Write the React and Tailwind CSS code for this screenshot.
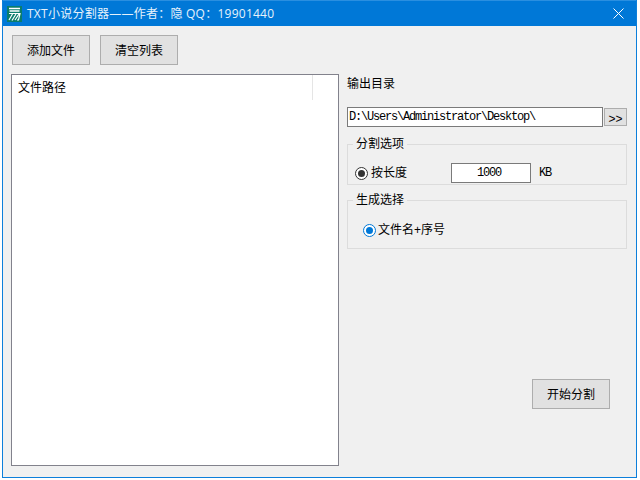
const cjk = "font-['Liberation_Sans','Noto_Sans_CJK_SC',sans-serif]";
const mono = "font-['Liberation_Mono','Noto_Sans_CJK_SC',monospace]";

function Btn({ children, className = "" }) {
  return (
    <button className={`flex items-center justify-center border border-[#adadad] bg-[#e1e1e1] pt-[1px] text-[12px] text-black ${cjk} ${className}`}>
      {children}
    </button>
  );
}

function Logo() {
  return (
    <svg width="15" height="16" viewBox="0 0 15 16" className="shrink-0">
      <rect width="15" height="16" fill="#0b7d6c" />
      <path d="M2 2.5h11M2.5 5h10" stroke="#fff" strokeWidth="1.3" fill="none" />
      <path d="M2 7.5h11L11.5 14h-1.5M5.5 8l-3.5 6M9 8l-4 6.5M12 8l-4 6" stroke="#fff" strokeWidth="1.2" fill="none" />
    </svg>
  );
}

function Radio({ blue }) {
  return (
    <span className={`flex h-[13px] w-[13px] shrink-0 items-center justify-center rounded-full border-[1.5px] bg-white ${blue ? "border-[#0078d7]" : "border-[#333333]"}`}>
      <span className={`h-[7px] w-[7px] rounded-full ${blue ? "bg-[#0078d7]" : "bg-[#333333]"}`} />
    </span>
  );
}

export default function App() {
  return (
    <div className="h-[480px] w-[640px] bg-white pl-[2px] pr-[3px] pb-[2px]">
      <div className={`flex h-[478px] w-[635px] flex-col border-x border-b border-[#0c7fdb] bg-[#f0f0f0] ${cjk}`}>
        <div className="flex h-[26px] shrink-0 items-center border-t border-[#2a8fe0] bg-[#0078d7] pl-[4px] pr-[12px] text-white">
          <Logo />
          <span className="ml-[5px] whitespace-nowrap text-[12px] tracking-[0.25px] font-['Open_Sans','Noto_Sans_CJK_SC',sans-serif] text-[#e6f2fb]">
            TXT小说分割器——作者：隐 QQ：19901440
          </span>
          <svg width="11" height="11" viewBox="0 0 11 11" className="ml-auto">
            <path d="M.5.5l10 10M10.5.5l-10 10" stroke="#fff" strokeWidth="1" fill="none" />
          </svg>
        </div>
        <div className="flex min-h-0 flex-1 pl-[8px] pr-[9px] pt-[9px]">
          <div className="flex w-[328px] shrink-0 flex-col">
            <div className="flex gap-[10px] pl-[1px]">
              <Btn className="h-[30px] w-[78px]">添加文件</Btn>
              <Btn className="h-[30px] w-[78px]">清空列表</Btn>
            </div>
            <div className="mt-[9px] h-[392px] border border-[#82828c] bg-white">
              <div className="flex h-[25px] w-[301px] items-center border-r border-[#e5e5e5] pl-[6px] pt-[1px] text-[12px] text-black">
                文件路径
              </div>
            </div>
          </div>
          <div className="ml-[8px] flex w-[280px] flex-col">
            <div className="mt-[39px] h-[20px] text-[12px] leading-[20px] text-black">输出目录</div>
            <div className="mt-[13px] flex items-center">
              <div className={`flex h-[20px] w-[256px] shrink-0 items-center border border-[#7a7a7a] bg-white pl-[1px] text-[12px] tracking-[-1.2px] whitespace-nowrap text-black ${mono}`}>
                D:\Users\Administrator\Desktop\
              </div>
              <Btn className="ml-[1px] h-[18px] w-[23px] !pt-[3px] !text-[12px] font-light">&gt;&gt;</Btn>
            </div>
            <fieldset className="mt-[9px] h-[49px] border border-[#dcdcdc]">
              <legend className="ml-[5px] px-[3px] text-[12px] leading-[17px] text-black">分割选项</legend>
              <div className="mt-[10px] flex items-center pl-[7px]">
                <Radio />
                <span className="ml-[3px] w-[80px] text-[12px] text-black">按长度</span>
                <div className={`flex h-[20px] w-[80px] items-center justify-center border border-[#7a7a7a] bg-white pr-[4px] text-[12px] tracking-[-1.2px] text-black ${mono}`}>1000</div>
                <span className={`ml-[8px] text-[12px] tracking-[-1.2px] text-black ${mono}`}>KB</span>
              </div>
            </fieldset>
            <fieldset className="mt-[7px] h-[57px] border border-[#dcdcdc]">
              <legend className="ml-[5px] px-[3px] text-[12px] leading-[17px] text-black">生成选择</legend>
              <div className="mt-[12px] flex items-center pl-[15px]">
                <Radio blue />
                <span className="ml-[2px] text-[12px] text-black">文件名+序号</span>
              </div>
            </fieldset>
            <div className="mt-[130px] flex pl-[185px]">
              <Btn className="h-[30px] w-[78px]">开始分割</Btn>
            </div>
          </div>
        </div>
      </div>
    </div>
  );
}
